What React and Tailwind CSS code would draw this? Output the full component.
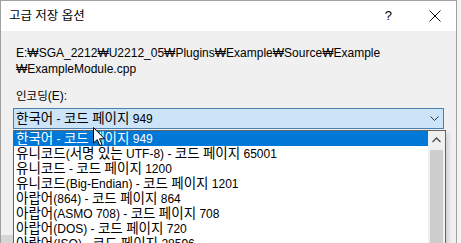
import React from "react";

function T({ s, cls }) {
  const parts = s.split(/([\uAC00-\uD7A3]+)/);
  return (
    <span className="whitespace-pre">
      {parts.map((p, i) =>
        /[\uAC00-\uD7A3]/.test(p) ? (
          <span key={i} className={cls}>
            {p}
          </span>
        ) : (
          <span key={i}>{p}</span>
        )
      )}
    </span>
  );
}

const items = [
  "한국어 - 코드 페이지 949",
  "유니코드(서명 있는 UTF-8) - 코드 페이지 65001",
  "유니코드 - 코드 페이지 1200",
  "유니코드(Big-Endian) - 코드 페이지 1201",
  "아랍어(864) - 코드 페이지 864",
  "아랍어(ASMO 708) - 코드 페이지 708",
  "아랍어(DOS) - 코드 페이지 720",
  "아랍어(ISO) - 코드 페이지 28596",
];

const HK = "text-[13.5px] leading-[15px]";

export default function App() {
  return (
    <div
      className="w-[461px] h-[243px] overflow-hidden relative flex bg-[#f4f4f4] text-black"
      style={{ fontFamily: '"Liberation Sans", "Noto Sans CJK KR", sans-serif' }}
    >
      <div className="w-[457px] h-full flex flex-col border-l border-t border-r border-[#a0a0a0]">
        {/* title bar */}
        <div className="h-[30px] bg-white flex items-center pl-[8px] shrink-0">
          <div className="text-[12px] leading-[16px]">
            <T s="고급 저장 옵션" cls="text-[12.5px]" />
          </div>
          <div className="ml-auto text-[13px] leading-[16px] mr-[37px]">?</div>
          <svg width="12" height="12" viewBox="0 0 12 12" className="mr-[15px]">
            <path d="M0.5 0.5 L11.5 11.5 M11.5 0.5 L0.5 11.5" stroke="#111" strokeWidth="1" fill="none" />
          </svg>
        </div>
        {/* body */}
        <div className="flex-1 bg-[#f0f0f0] relative pl-[15px] pt-[14px]">
          <div className="text-[12px] leading-[16px]">
            E:₩SGA_2212₩U2212_05₩Plugins₩Example₩Source₩Example
            <br />
            ₩ExampleModule.cpp
          </div>
          <div className="mt-[11px] text-[12px] leading-[16px]">
            <T s="인코딩(E):" cls="text-[11.5px]" />
          </div>
          <div className="mt-[4px] ml-[-3px] w-[431px] h-[21px] bg-[#cce4f7] border border-[#4a7fae] flex items-center pl-[2px] text-[12px] leading-[15px]">
            <T s="한국어 - 코드 페이지 949" cls={HK} />
            <svg width="9" height="6" viewBox="0 0 9 6" className="ml-auto mr-[4px]">
              <path d="M0.5 0.5 L4.5 4.5 L8.5 0.5" stroke="#333" strokeWidth="1" fill="none" />
            </svg>
          </div>
          <div className="absolute bottom-0 left-0 w-[12px] h-[8px] bg-[#d6d6d6]"></div>

          {/* dropdown list */}
          <div className="absolute left-[12px] top-[99px] w-[433px] h-[140px] bg-white border border-[#646464] flex shadow-[3px_3px_4px_rgba(0,0,0,0.12)]">
            <div className="flex-1 flex flex-col overflow-hidden">
              {items.map((it, i) => (
                <div
                  key={i}
                  className={
                    "h-[15px] shrink-0 flex items-center pl-[2px] text-[12px] leading-[15px] " +
                    (i === 0 ? "bg-[#0078d7] text-white" : "")
                  }
                >
                  <T s={it} cls={HK} />
                </div>
              ))}
            </div>
            <div className="w-[17px] bg-[#f0f0f0] flex flex-col items-center">
              <div className="h-[17px] w-full flex items-center justify-center">
                <svg width="9" height="6" viewBox="0 0 9 6">
                  <path d="M0.5 5 L4.5 1 L8.5 5" stroke="#555" strokeWidth="1.5" fill="none" />
                </svg>
              </div>
              <div className="mt-[2px] w-[13px] flex-1 bg-[#cdcdcd]"></div>
            </div>
          </div>
        </div>
      </div>

      {/* mouse cursor */}
      <svg width="13" height="20" viewBox="0 0 13 20" className="absolute left-[93px] top-[127px]">
        <path
          d="M0.5 0.5 L0.5 16 L4.2 12.6 L6.8 18.6 L9 17.6 L6.5 11.8 L11.5 11.8 Z"
          fill="white"
          stroke="black"
          strokeWidth="1"
          strokeLinejoin="round"
        />
      </svg>
    </div>
  );
}
